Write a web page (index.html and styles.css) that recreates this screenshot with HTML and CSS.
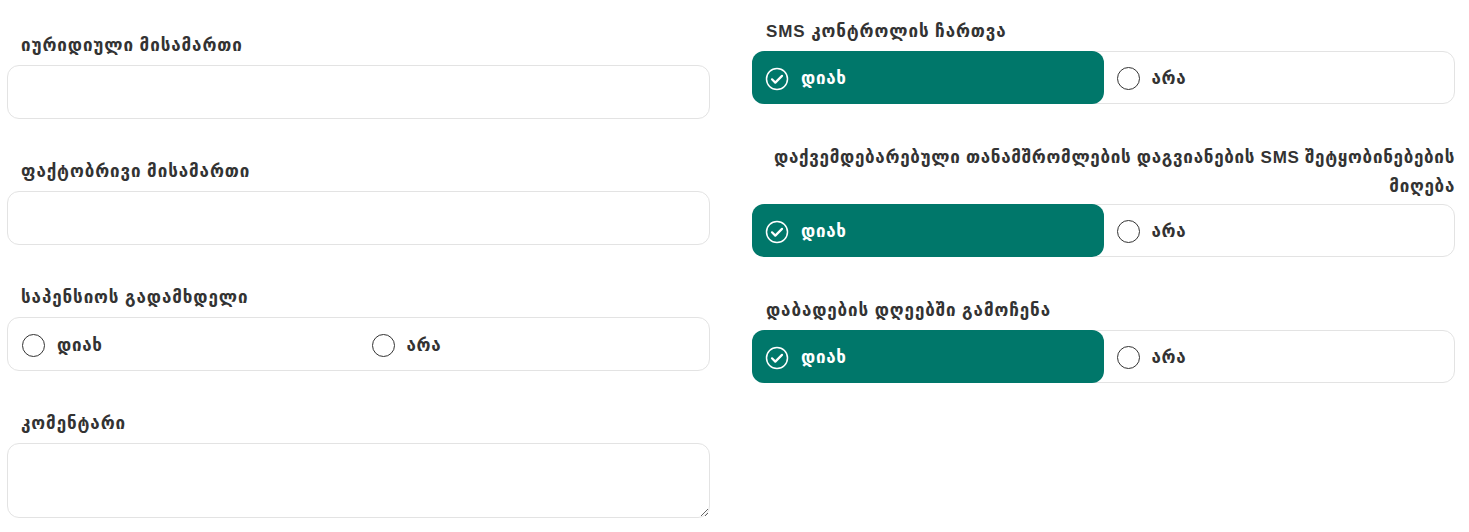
FILE: index.html
```html
<!DOCTYPE html>
<html lang="ka">
<head>
  <meta charset="UTF-8">
  <meta name="viewport" content="width=device-width, initial-scale=1.0">
  <title>პარამეტრები</title>
  <link rel="stylesheet" href="styles.css">
</head>
<body>
  <div class="form">
    <!-- Left column -->
    <div class="column column-left">
      <div class="field">
        <label class="field-label">იურიდიული მისამართი</label>
        <input class="text-input" type="text">
      </div>
      <div class="field">
        <label class="field-label">ფაქტობრივი მისამართი</label>
        <input class="text-input" type="text">
      </div>
      <div class="field">
        <label class="field-label">საპენსიოს გადამხდელი</label>
        <div class="choice">
          <div class="option">
            <span class="radio"></span>
            <span class="option-text">დიახ</span>
          </div>
          <div class="option">
            <span class="radio"></span>
            <span class="option-text">არა</span>
          </div>
        </div>
      </div>
      <div class="field">
        <label class="field-label">კომენტარი</label>
        <textarea class="text-area"></textarea>
      </div>
    </div>

    <!-- Right column -->
    <div class="column column-right">
      <div class="field">
        <label class="field-label">SMS კონტროლის ჩართვა</label>
        <div class="choice choice-short">
          <div class="option selected">
            <svg class="check" viewBox="0 0 24 24" width="24" height="24">
              <circle cx="12" cy="12" r="10.5" fill="none" stroke="#fff" stroke-width="1.5"/>
              <path d="M7 12.3l3.3 3.3L17 8.9" fill="none" stroke="#fff" stroke-width="2.2" stroke-linecap="round" stroke-linejoin="round"/>
            </svg>
            <span class="option-text">დიახ</span>
          </div>
          <div class="option">
            <span class="radio"></span>
            <span class="option-text">არა</span>
          </div>
        </div>
      </div>
      <div class="field">
        <label class="field-label field-label-end">დაქვემდებარებული თანამშრომლების დაგვიანების SMS შეტყობინებების მიღება</label>
        <div class="choice choice-short">
          <div class="option selected">
            <svg class="check" viewBox="0 0 24 24" width="24" height="24">
              <circle cx="12" cy="12" r="10.5" fill="none" stroke="#fff" stroke-width="1.5"/>
              <path d="M7 12.3l3.3 3.3L17 8.9" fill="none" stroke="#fff" stroke-width="2.2" stroke-linecap="round" stroke-linejoin="round"/>
            </svg>
            <span class="option-text">დიახ</span>
          </div>
          <div class="option">
            <span class="radio"></span>
            <span class="option-text">არა</span>
          </div>
        </div>
      </div>
      <div class="field">
        <label class="field-label">დაბადების დღეებში გამოჩენა</label>
        <div class="choice choice-short">
          <div class="option selected">
            <svg class="check" viewBox="0 0 24 24" width="24" height="24">
              <circle cx="12" cy="12" r="10.5" fill="none" stroke="#fff" stroke-width="1.5"/>
              <path d="M7 12.3l3.3 3.3L17 8.9" fill="none" stroke="#fff" stroke-width="2.2" stroke-linecap="round" stroke-linejoin="round"/>
            </svg>
            <span class="option-text">დიახ</span>
          </div>
          <div class="option">
            <span class="radio"></span>
            <span class="option-text">არა</span>
          </div>
        </div>
      </div>
    </div>
  </div>
</body>
</html>
```

FILE: styles.css
```css
/* Base Reset */
body, label, input, textarea {
  margin: 0;
  padding: 0;
}
body {
  font-family: 'Liberation Sans', 'DejaVu Sans', sans-serif;
  background-color: #ffffff;
  color: #333;
  padding: 0 14px 0 7px;
}

/* Two columns */
.form {
  display: grid;
  grid-template-columns: 1fr 1fr;
  column-gap: 42px;
}

.column-left {
  padding-top: 31px;
}

.column-right {
  padding-top: 17px;
}

.field {
  display: flex;
  flex-direction: column;
  margin-bottom: 38px;
}

.column-right .field {
  margin-bottom: 39px;
}

.field:last-child,
.column-right .field:last-child {
  margin-bottom: 0;
}

.field-label {
  font-size: 17px;
  font-weight: bold;
  letter-spacing: 0.9px;
  line-height: 29px;
  padding-left: 14px;
  margin-bottom: 5px;
  color: #333;
}

.column-right .field-label-end {
  text-align: right;
  letter-spacing: 0.7px;
  padding-left: 0;
  margin-bottom: 3px;
}

/* Inputs */
.text-input,
.text-area {
  box-sizing: border-box;
  width: 100%;
  border: 1px solid #e3e3e3;
  border-radius: 12px;
  background: #fff;
  font-family: inherit;
  font-size: 15px;
  padding: 0 14px;
  outline: none;
}

.text-input {
  height: 54px;
}

.text-area {
  height: 75px;
  padding: 10px 14px;
  resize: vertical;
}

/* Yes / No choice */
.choice {
  box-sizing: border-box;
  display: grid;
  grid-template-columns: 1fr 1fr;
  height: 54px;
  border: 1px solid #e3e3e3;
  border-radius: 12px;
}

.choice-short {
  height: 53px;
}

.option {
  display: flex;
  align-items: center;
  gap: 12px;
  padding-left: 14px;
  padding-top: 2px;
  border-radius: 12px;
}

.option.selected {
  background-color: #00776a;
  color: #fff;
  margin: -1px 0 -1px -1px;
  padding-left: 13px;
}

.option + .option {
  padding-left: 13px;
}

.option-text {
  font-size: 17px;
  font-weight: bold;
  letter-spacing: 0.7px;
}

.radio {
  box-sizing: border-box;
  width: 23px;
  height: 23px;
  border: 1.5px solid #333;
  border-radius: 50%;
}

.check {
  display: block;
  width: 24px;
  height: 24px;
}
```
